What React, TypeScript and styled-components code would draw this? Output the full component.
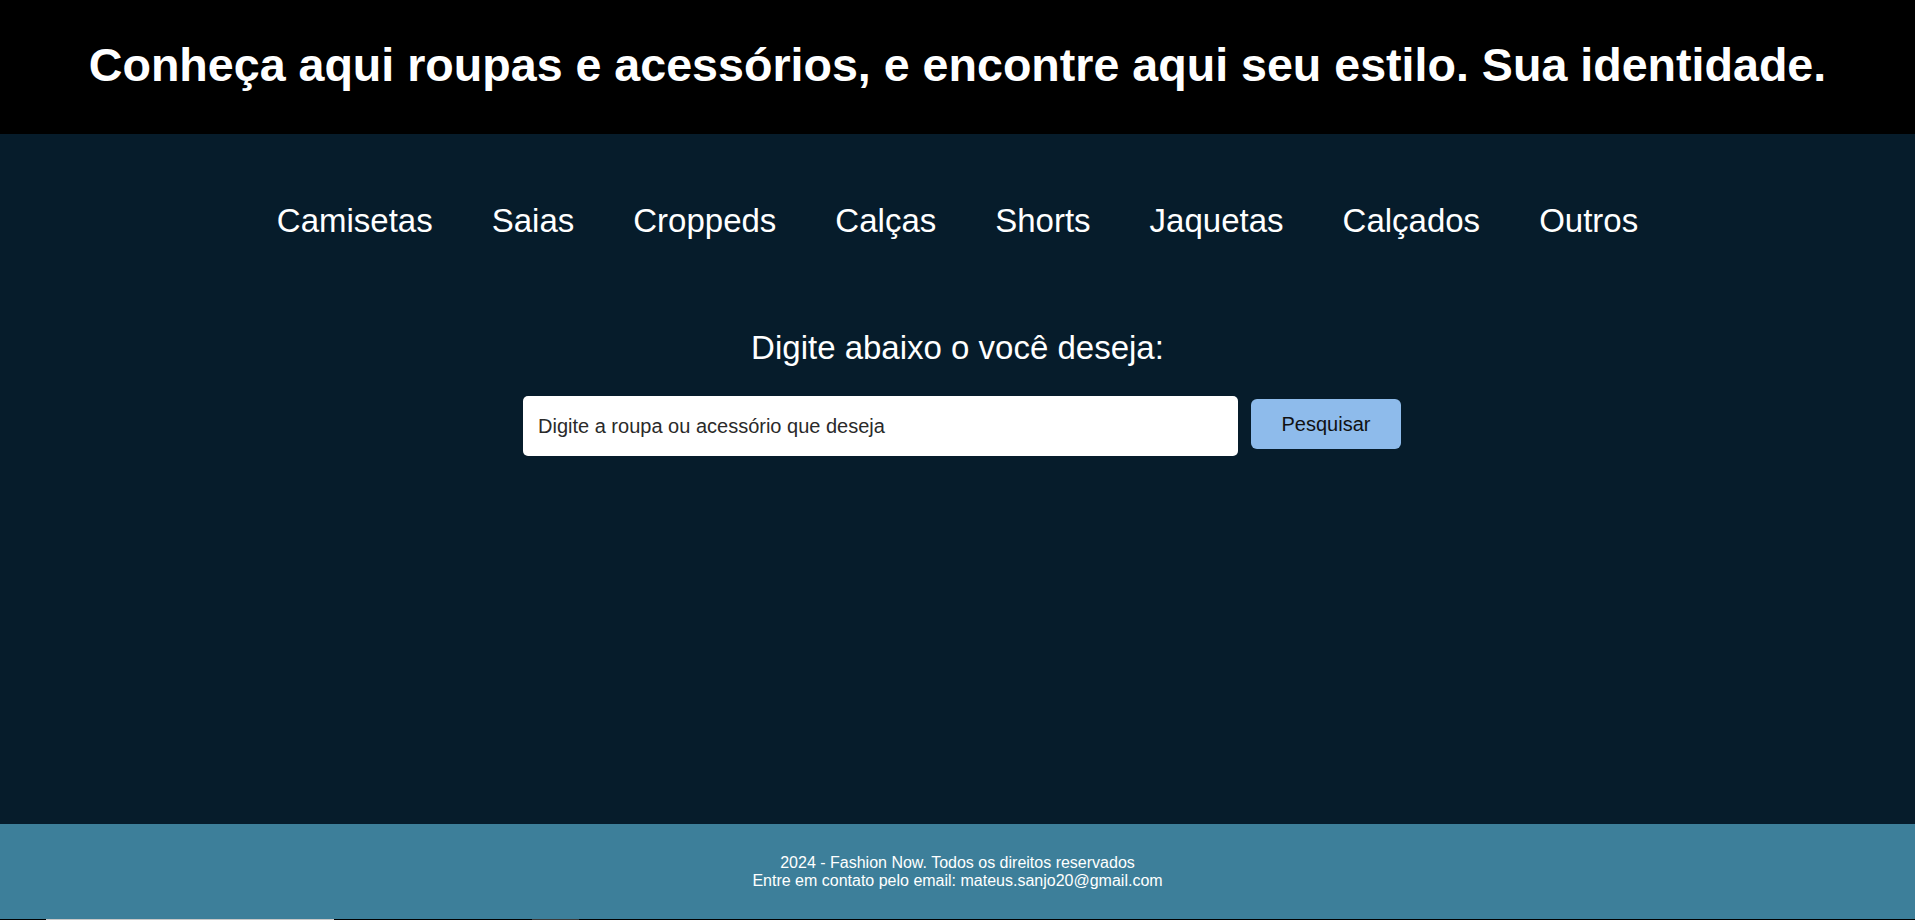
import React from "react";
import styled, { createGlobalStyle } from "styled-components";

const GlobalStyle = createGlobalStyle`
  html, body {
    margin: 0;
    padding: 0;
    background: #061c2b;
    font-family: "Liberation Sans", Arial, Helvetica, sans-serif;
  }
  * { box-sizing: border-box; }
`;

const Page = styled.div`
  height: 100vh;
  overflow: hidden;
  display: flex;
  flex-direction: column;
`;

const Header = styled.header`
  background: #000000;
  padding: 38px 0 41px;
`;

const Title = styled.h1`
  margin: 0;
  color: #ffffff;
  font-size: 46.6px;
  font-weight: 700;
  line-height: 55px;
  text-align: center;
`;

const Main = styled.main`
  flex: 1;
  background: #061c2b;
  display: flex;
  flex-direction: column;
  align-items: center;
  padding-top: 68px;
`;

const NavList = styled.ul`
  list-style: none;
  margin: 0;
  padding: 0;
  display: flex;
  gap: 59px;
`;

const NavItem = styled.li`
  color: #ffffff;
  font-size: 33px;
  line-height: 38px;
  cursor: pointer;
`;

const Prompt = styled.h2`
  margin: 89px 0 0;
  color: #ffffff;
  font-size: 33px;
  font-weight: 400;
  line-height: 38px;
`;

const SearchForm = styled.form`
  margin-top: 29px;
  display: flex;
  align-items: flex-start;
  gap: 13px;
  padding-left: 9px;
`;

const SearchInput = styled.input`
  width: 715px;
  height: 60px;
  border: none;
  border-radius: 5px;
  padding: 0 15px;
  background: #ffffff;
  font-family: "Liberation Sans", Arial, sans-serif;
  font-size: 20px;
  color: #222;
  outline: none;
  &::placeholder {
    color: #2a2a2a;
    opacity: 1;
  }
`;

const SearchButton = styled.button`
  width: 150px;
  height: 50px;
  margin-top: 3px;
  border: none;
  border-radius: 6px;
  background: #8ebbeb;
  color: #111111;
  font-family: "Liberation Sans", Arial, sans-serif;
  font-size: 20px;
  cursor: pointer;
`;

const Footer = styled.footer`
  background: #3d7f9a;
  padding: 30px 0 29px;
  color: #ffffff;
  font-size: 16px;
  line-height: normal;
  text-align: center;
`;

const FooterLine = styled.p`
  margin: 0;
`;

const BottomEdge = styled.div`
  flex: 0 0 1px;
  height: 1px;
  background: linear-gradient(
    to right,
    #000 0,
    #000 46px,
    #c8c8c8 46px,
    #c8c8c8 334px,
    #000 334px,
    #000 532px,
    #3a3a3a 532px,
    #3a3a3a 579px,
    #000 579px
  );
`;

const categories = [
  "Camisetas",
  "Saias",
  "Croppeds",
  "Calças",
  "Shorts",
  "Jaquetas",
  "Calçados",
  "Outros",
];

export default function App() {
  return (
    <>
      <GlobalStyle />
      <Page>
        <Header>
          <Title>
            Conheça aqui roupas e acessórios, e encontre aqui seu estilo. Sua identidade.
          </Title>
        </Header>
        <Main>
          <nav>
            <NavList>
              {categories.map((c) => (
                <NavItem key={c}>{c}</NavItem>
              ))}
            </NavList>
          </nav>
          <Prompt>Digite abaixo o você deseja:</Prompt>
          <SearchForm onSubmit={(e) => e.preventDefault()}>
            <SearchInput type="text" placeholder="Digite a roupa ou acessório que deseja" />
            <SearchButton type="submit">Pesquisar</SearchButton>
          </SearchForm>
        </Main>
        <Footer>
          <FooterLine>2024 - Fashion Now. Todos os direitos reservados</FooterLine>
          <FooterLine>Entre em contato pelo email: mateus.sanjo20@gmail.com</FooterLine>
        </Footer>
        <BottomEdge />
      </Page>
    </>
  );
}
